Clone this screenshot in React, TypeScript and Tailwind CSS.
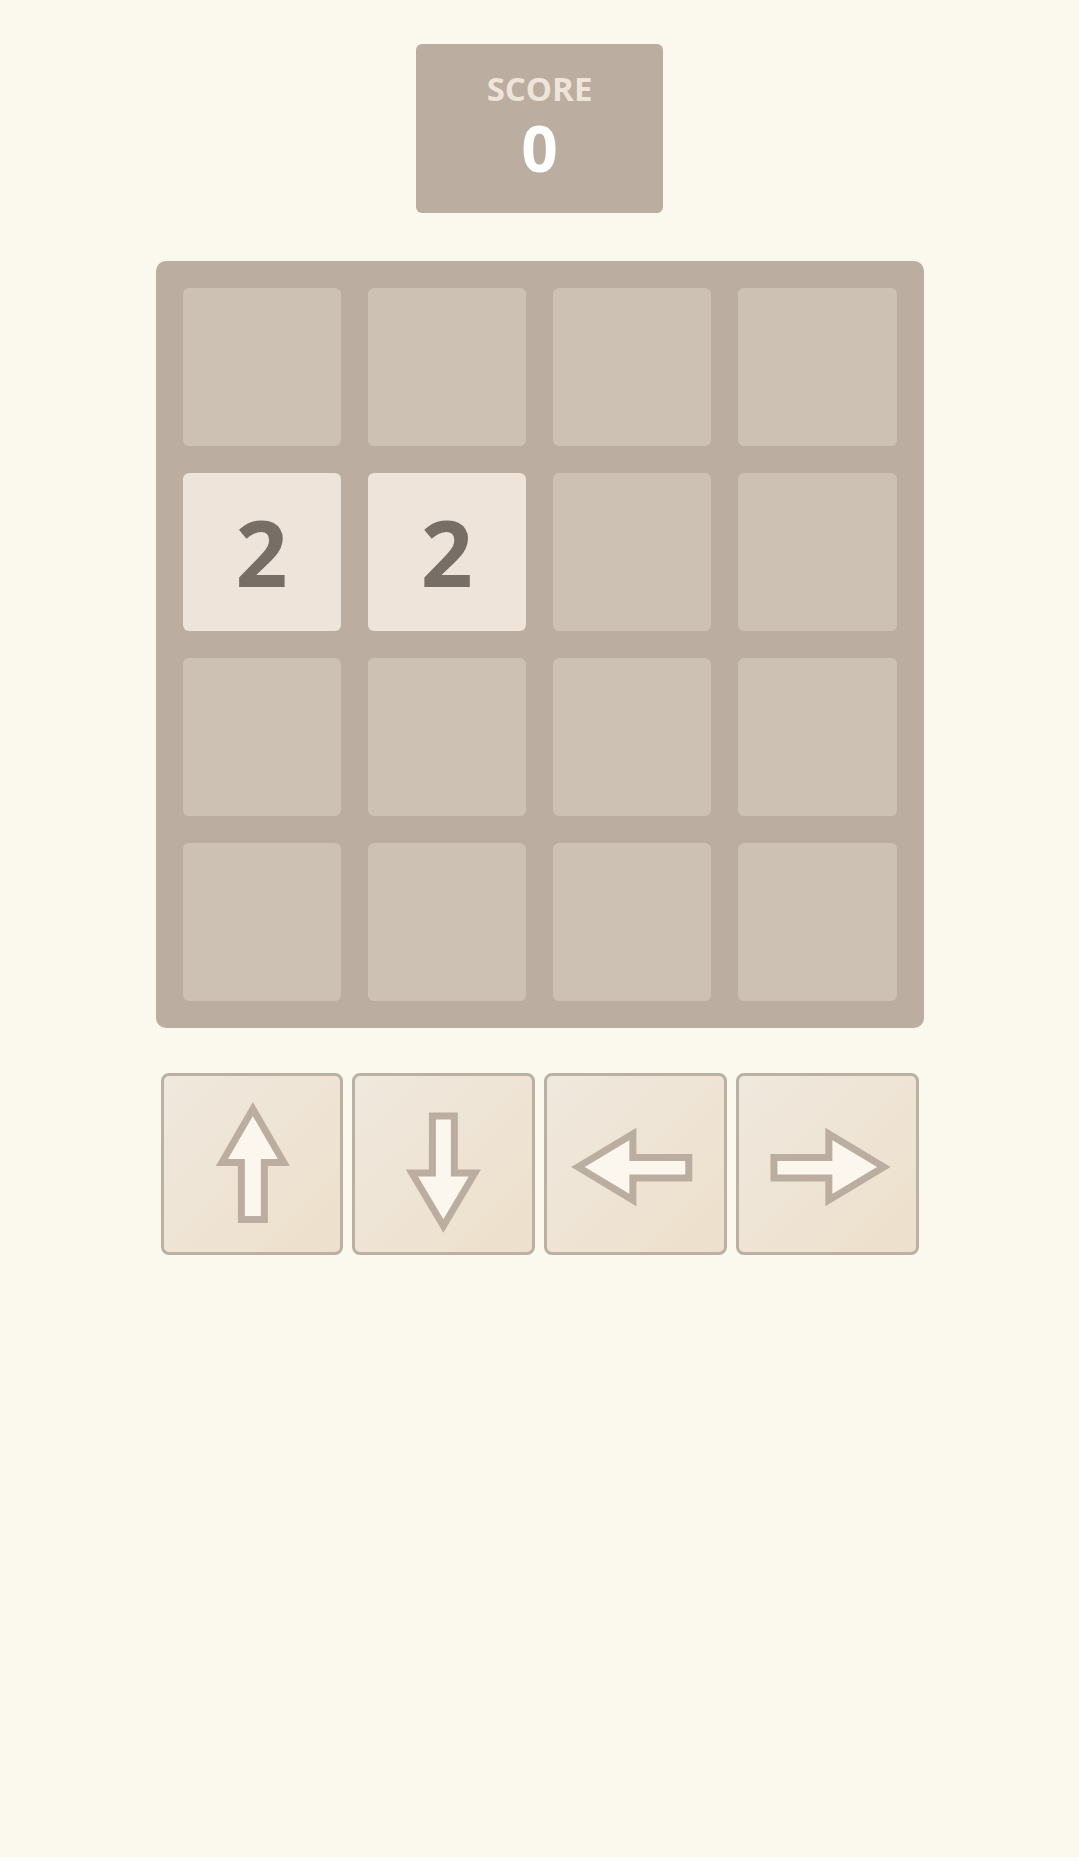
import React from "react";

const board: (number | null)[][] = [
  [null, null, null, null],
  [2, 2, null, null],
  [null, null, null, null],
  [null, null, null, null],
];

const arrows: { label: string; d: string }[] = [
  { label: "up", d: "M92 36 L123 89.5 L103.5 89.5 L103.5 146.5 L80.5 146.5 L80.5 89.5 L61 89.5 Z" },
  { label: "down", d: "M80.5 43 L102.5 43 L102.5 100 L123 100 L91.5 153 L60 100 L80.5 100 Z" },
  { label: "left", d: "M34 94 L89 61 L89 84.5 L145 84.5 L145 105 L89 105 L89 127 Z" },
  { label: "right", d: "M38 84.5 L93 84.5 L93 61 L148 94 L93 127 L93 105 L38 105 Z" },
];

export default function App() {
  return (
    <div className="bg-[#fefefb]" style={{ fontFamily: '"Open Sans", "Noto Sans", sans-serif' }}>
      <div className="h-[1857px] bg-[#fbf8ee] flex flex-col items-center pt-[44px]">
        <div className="w-[247px] h-[169px] rounded-[6px] bg-[#bbada0] flex flex-col items-center pt-[28px]">
          <div className="text-[33px] leading-[33px] font-bold text-[#eee4da]">SCORE</div>
          <div className="mt-[11px] text-[64px] leading-[64px] font-bold text-white">0</div>
        </div>

        <div className="mt-[48px] w-[768px] rounded-[10px] bg-[#bbada0] p-[27px] grid grid-cols-4 gap-[27px]">
          {board.flat().map((v, i) => (
            <div
              key={i}
              className={
                v
                  ? "h-[158px] rounded-[6px] bg-[#eee4da] flex items-center justify-center text-[91px] leading-[91px] font-bold text-[#776e65]"
                  : "h-[158px] rounded-[6px] bg-[#cdc1b4]"
              }
            >
              {v ?? ""}
            </div>
          ))}
        </div>

        <div className="mt-[45px] w-[758px] grid grid-cols-4 gap-[9px]">
          {arrows.map((a) => (
            <button
              key={a.label}
              aria-label={a.label}
              className="h-[182px] rounded-[8px] border-[3px] border-[#bcb0a3] bg-gradient-to-br from-[#f0e8de] to-[#ede0cb] p-0"
            >
              <svg viewBox="3 3 177 176" className="w-full h-full block" preserveAspectRatio="none">
                <path d={a.d} fill="#fbf7ef" stroke="#bbada0" strokeWidth="7" strokeLinejoin="miter" />
              </svg>
            </button>
          ))}
        </div>
      </div>
    </div>
  );
}
